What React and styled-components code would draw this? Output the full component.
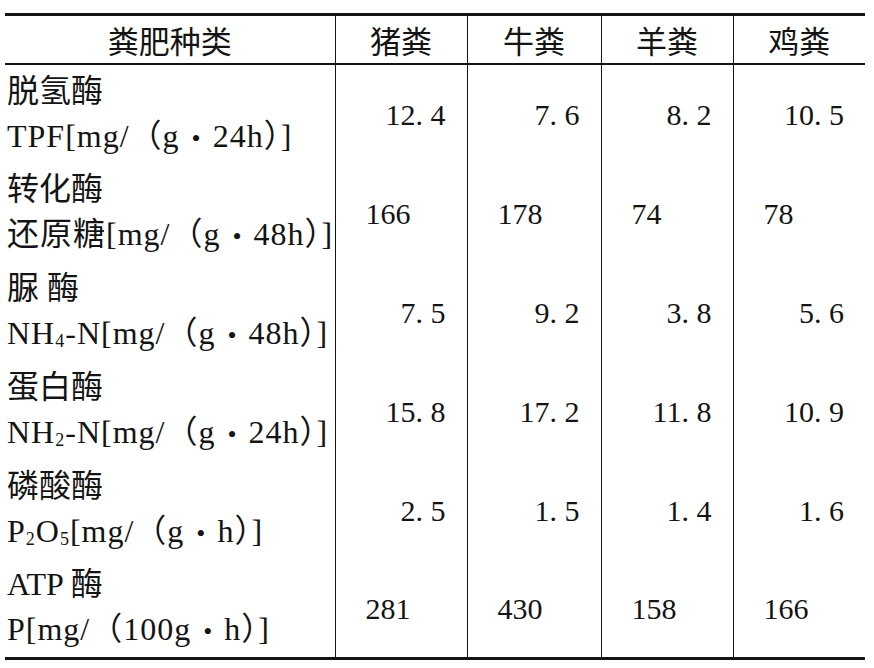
import React from 'react'
import styled, { createGlobalStyle } from 'styled-components';

const ink = '#141414';
const serif = `'Liberation Serif', 'Noto Sans CJK SC', serif`;

const GlobalStyle = createGlobalStyle`
  html, body {
    margin: 0;
    padding: 0;
    background: #ffffff;
  }
`;

const Page = styled.div`
    width: 874px;
    height: 668px;
    padding: 13px 0 0 5px;
    box-sizing: border-box;
    background: #ffffff;
    font-family: ${serif};
    color: ${ink};
`;

const Table = styled.table`
    width: 860px;
    table-layout: fixed;
    border-collapse: collapse;
    border-top: 3px solid ${ink};
    border-bottom: 3px solid ${ink};
    font-family: ${serif};
    color: ${ink};
`;

const Col = styled.col`
    width: ${(p) => p.$w}px;
`;

const HeadCell = styled.th`
    height: 47px;
    padding: 0;
    font-family: ${serif};
    font-size: 31px;
    font-weight: normal;
    text-align: center;
    border-bottom: 2px solid ${ink};
    border-left: 1.5px solid ${ink};
    &:first-child {
        border-left: none;
    }
`;

const LabelCell = styled.td`
    height: 99px;
    padding: 1px 0 0 2px;
    box-sizing: border-box;
    vertical-align: middle;
    white-space: nowrap;
    font-family: ${serif};
`;

const Line = styled.div`
    font-size: 32px;
    line-height: 45px;
    letter-spacing: ${(p) => (p.$unit ? '1px' : '0')};
`;

const Dot = styled.span`
    display: inline-block;
    margin: 0 11px 0 12px;
    font-size: 26px;
`;

const SubText = styled.sub`
    font-size: 18px;
    vertical-align: -3px;
    line-height: 0;
`;

const ValueCell = styled.td`
    font-family: ${serif};
    font-size: 30px;
    padding: ${(p) => (p.$align === 'left' ? '2px 0 0 30px' : '2px 21px 0 0')};
    text-align: ${(p) => p.$align};
    white-space: nowrap;
    border-left: 1.5px solid ${ink};
`;

const columns = [330, 132, 134, 132, 132];

const heads = ['粪肥种类', '猪粪', '牛粪', '羊粪', '鸡粪'];

const rows = [
    { name: '脱氢酶', unit: <>TPF[mg/（g<Dot>•</Dot>24h）]</>, values: ['12. 4', '7. 6', '8. 2', '10. 5'], align: 'right' },
    { name: '转化酶', unit: <>还原糖[mg/（g<Dot>•</Dot>48h）]</>, values: ['166', '178', '74', '78'], align: 'left' },
    { name: '脲 酶', unit: <>NH<SubText>4</SubText>-N[mg/（g<Dot>•</Dot>48h）]</>, values: ['7. 5', '9. 2', '3. 8', '5. 6'], align: 'right' },
    { name: '蛋白酶', unit: <>NH<SubText>2</SubText>-N[mg/（g<Dot>•</Dot>24h）]</>, values: ['15. 8', '17. 2', '11. 8', '10. 9'], align: 'right' },
    { name: '磷酸酶', unit: <>P<SubText>2</SubText>O<SubText>5</SubText>[mg/（g<Dot>•</Dot>h）]</>, values: ['2. 5', '1. 5', '1. 4', '1. 6'], align: 'right' },
    { name: 'ATP 酶', unit: <>P[mg/（100g<Dot>•</Dot>h）]</>, values: ['281', '430', '158', '166'], align: 'left' },
];

const App = () => {
    return (
        <Page>
            <GlobalStyle />
            <Table>
                <colgroup>
                    {columns.map((w, i) => <Col key={i} $w={w} />)}
                </colgroup>
                <thead>
                    <tr>
                        {heads.map((h) => <HeadCell key={h}>{h}</HeadCell>)}
                    </tr>
                </thead>
                <tbody>
                    {rows.map((r) => (
                        <tr key={r.name}>
                            <LabelCell>
                                <Line>{r.name}</Line>
                                <Line $unit>{r.unit}</Line>
                            </LabelCell>
                            {r.values.map((v, i) => (
                                <ValueCell key={i} $align={r.align}>{v}</ValueCell>
                            ))}
                        </tr>
                    ))}
                </tbody>
            </Table>
        </Page>
    )
}

export default App;
